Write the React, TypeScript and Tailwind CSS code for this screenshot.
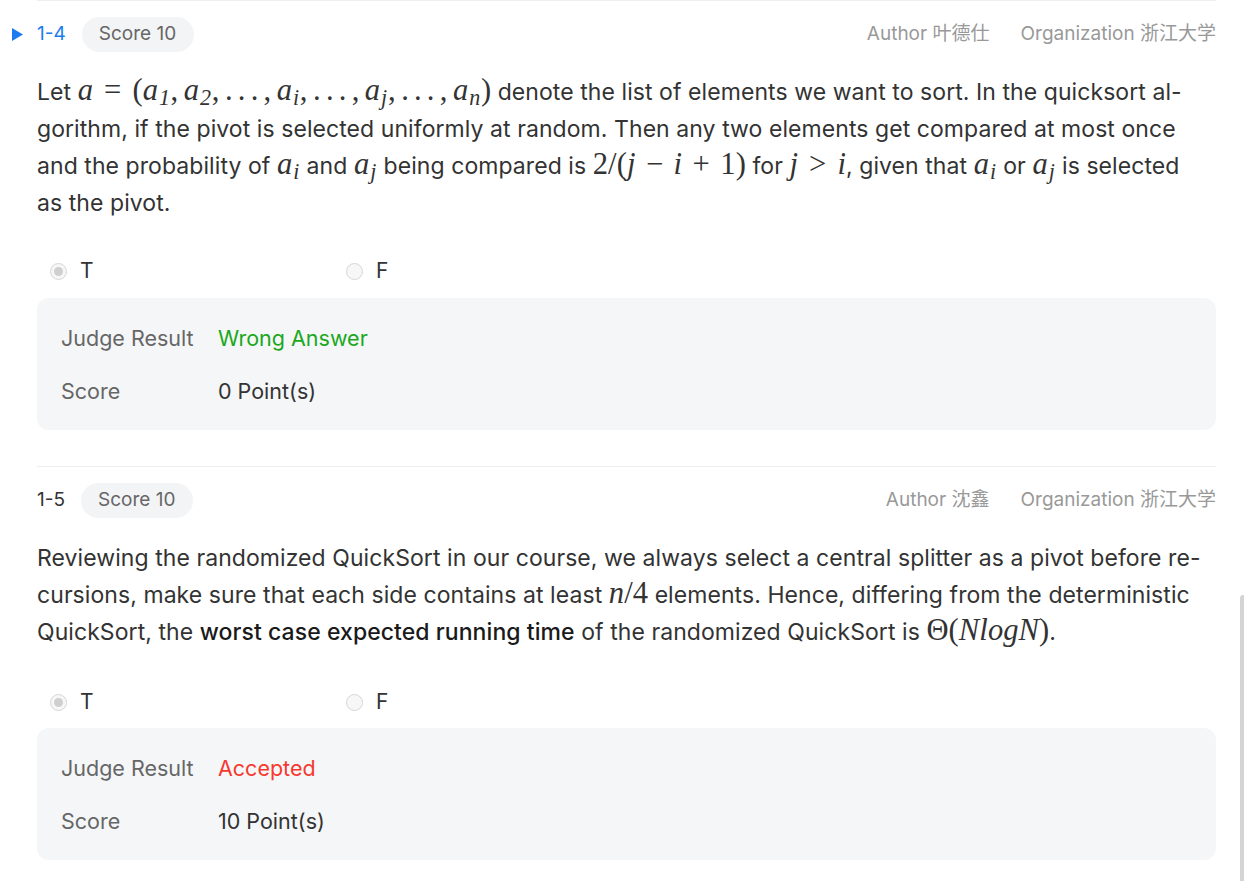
import React from 'react';

const FONT = { fontFamily: 'Inter, "Noto Sans", "Noto Sans CJK SC", sans-serif' };
const SERIF = { fontFamily: '"Liberation Serif", "DejaVu Serif", serif' };

// math italic run
function M({ children }: { children: React.ReactNode }) {
  return (
    <span className="italic text-[1.33em] leading-none" style={SERIF}>
      {children}
    </span>
  );
}

// upright math symbols
function R({ children, className = '' }: { children: React.ReactNode; className?: string }) {
  return (
    <span className={`text-[1.33em] leading-none ${className}`} style={SERIF}>
      {children}
    </span>
  );
}

// binary operator / relation with spacing
function Op({ children, rel }: { children: React.ReactNode; rel?: boolean }) {
  return (
    <span className={`text-[1.33em] leading-none ${rel ? 'mx-[0.36em]' : 'mx-[0.34em]'}`} style={SERIF}>
      {children}
    </span>
  );
}

function Sub({ children }: { children: React.ReactNode }) {
  return <span className="text-[0.72em] relative top-[0.22em] ml-[0.04em] mr-[0.03em]">{children}</span>;
}

function A({ s }: { s: string }) {
  return (
    <M>
      a<Sub>{s}</Sub>
    </M>
  );
}

function Comma() {
  return <R className="mr-[0.18em]">,</R>;
}

function Dots() {
  return <R className="tracking-[0.17em]">...</R>;
}

function Radio({ checked, label }: { checked?: boolean; label: string }) {
  return (
    <label className="flex items-center gap-[13px] w-[296px]">
      <span className="w-[17px] h-[17px] rounded-full border border-[#d6d6d6] bg-[#f7f7f7] flex items-center justify-center">
        {checked && <span className="w-[9px] h-[9px] rounded-full bg-[#cfcfcf]" />}
      </span>
      <span className="text-[21px] text-[#333]">{label}</span>
    </label>
  );
}

function Header({ id, active, author }: { id: string; active?: boolean; author: string }) {
  return (
    <div className="relative flex items-center h-[35px]">
      {active && (
        <svg className="absolute left-[-25px] top-[11px]" width="11" height="13" viewBox="0 0 11 13">
          <path d="M0 0 L11 6.5 L0 13 Z" fill="#1a7cf0" />
        </svg>
      )}
      <span className={`text-[19px] ${active ? 'text-[#1a7cf0]' : 'text-[#333]'}`}>{id}</span>
      <span className="ml-[16px] h-[35px] pl-[17px] pr-[18px] rounded-full bg-[#f3f4f6] text-[19px] text-[#666] flex items-center">
        Score 10
      </span>
      <div className="ml-auto flex items-center gap-[31px] text-[19px] text-[#999]">
        <span>Author {author}</span>
        <span>Organization 浙江大学</span>
      </div>
    </div>
  );
}

function Result({ result, color, score }: { result: string; color: string; score: string }) {
  return (
    <div className="rounded-[12px] bg-[#f5f6f8] px-[24px] pt-[26px] pb-[25px] flex flex-col gap-[25px] text-[21.5px]">
      <div className="flex items-center h-[28px]">
        <span className="w-[157px] text-[#666]">Judge Result</span>
        <span className={color}>{result}</span>
      </div>
      <div className="flex items-center h-[28px]">
        <span className="w-[157px] text-[#666]">Score</span>
        <span className="text-[#333]">{score}</span>
      </div>
    </div>
  );
}

export default function App() {
  return (
    <div className="relative w-[1244px] h-[881px] overflow-hidden bg-white" style={FONT}>
      <div className="pl-[37px] pr-[28px]">
        {/* 1-4 */}
        <div className="border-t border-[#eeeeee] pt-[16px]">
          <Header id="1-4" active author="叶德仕" />
          <p className="mt-[22px] text-[23px] tracking-[0.003em] leading-[37px] text-[#333] whitespace-nowrap">
            Let <M>a</M>
            <Op rel>=</Op>
            <R>(</R>
            <A s="1" />
            <Comma />
            <A s="2" />
            <Comma />
            <Dots />
            <Comma />
            <A s="i" />
            <Comma />
            <Dots />
            <Comma />
            <A s="j" />
            <Comma />
            <Dots />
            <Comma />
            <A s="n" />
            <R>)</R> denote the list of elements we want to sort. In the quicksort al-
            <br />
            gorithm, if the pivot is selected uniformly at random. Then any two elements get compared at most once
            <br />
            and the probability of <A s="i" /> and <A s="j" /> being compared is <R>2/(</R>
            <M>j</M>
            <Op>−</Op>
            <M>i</M>
            <Op>+</Op>
            <R>1)</R> for <M>j</M>
            <Op rel>&gt;</Op>
            <M>i</M>, given that <A s="i" /> or <A s="j" /> is selected
            <br />
            as the pivot.
          </p>
          <div className="mt-[35px] pl-[13px] flex items-center h-[28px]">
            <Radio checked label="T" />
            <Radio label="F" />
          </div>
          <div className="mt-[13px]">
            <Result result="Wrong Answer" color="text-[#1aa820]" score="0 Point(s)" />
          </div>
        </div>

        {/* 1-5 */}
        <div className="mt-[36px] border-t border-[#eeeeee] pt-[16px]">
          <Header id="1-5" author="沈鑫" />
          <p className="mt-[22px] text-[23px] tracking-[0.003em] leading-[37px] text-[#333] whitespace-nowrap">
            Reviewing the randomized QuickSort in our course, we always select a central splitter as a pivot before re-
            <br />
            cursions, make sure that each side contains at least <M>n</M>
            <R>/4</R> elements. Hence, differing from the deterministic
            <br />
            QuickSort, the <span className="font-medium text-[#1a1a1a]">worst case expected running time</span> of the randomized QuickSort is{' '}
            <R>Θ(</R>
            <M>NlogN</M>
            <R>)</R>.
          </p>
          <div className="mt-[37px] pl-[13px] flex items-center h-[28px]">
            <Radio checked label="T" />
            <Radio label="F" />
          </div>
          <div className="mt-[12px]">
            <Result result="Accepted" color="text-[#f5392e]" score="10 Point(s)" />
          </div>
        </div>
      </div>

      {/* scrollbar thumb */}
      <div className="absolute right-0 top-[595px] w-[4px] h-[300px] rounded-tl-[3px] bg-[#d4d4d4]" />
    </div>
  );
}
